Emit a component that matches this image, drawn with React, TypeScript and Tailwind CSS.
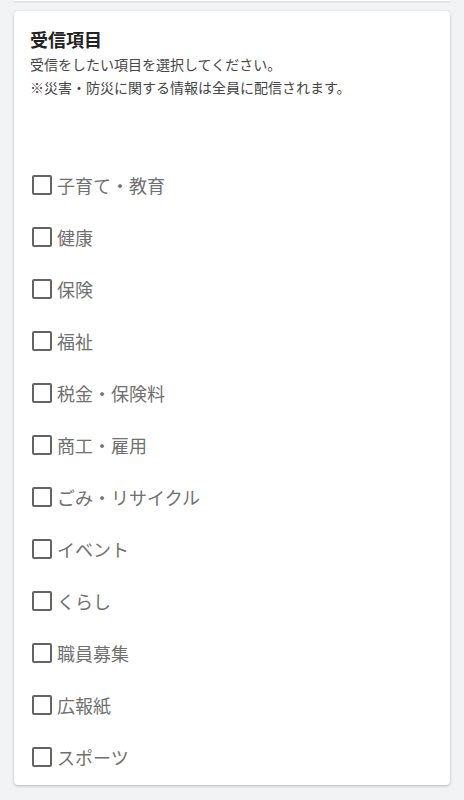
import React, { useState } from "react";

const items = [
  "子育て・教育",
  "健康",
  "保険",
  "福祉",
  "税金・保険料",
  "商工・雇用",
  "ごみ・リサイクル",
  "イベント",
  "くらし",
  "職員募集",
  "広報紙",
  "スポーツ",
];

export default function App() {
  const [checked, setChecked] = useState<Record<string, boolean>>({});

  const toggle = (name: string) => {
    setChecked((prev) => ({ ...prev, [name]: !prev[name] }));
  };

  return (
    <div
      className="min-h-[800px] w-[464px] bg-[#f2f3f5] pb-4"
      style={{ fontFamily: '"Noto Sans CJK JP", "Noto Sans", sans-serif' }}
    >
      {/* bottom edge of the previous card */}
      <div className="mx-[14px] h-[1px] bg-white shadow-[0_1px_2px_rgba(0,0,0,0.18)]" />

      <div className="mx-[14px] mt-[10px] rounded-[4px] bg-white px-4 pt-4 pb-[2px] shadow-[0_1px_3px_rgba(0,0,0,0.25)]">
        <h2 className="text-[18px] font-bold leading-[24px] text-[#222]">受信項目</h2>
        <div className="mt-[2px] text-[14px] leading-[23px] text-[#444]">
          <p>受信をしたい項目を選択してください。</p>
          <p>※災害・防災に関する情報は全員に配信されます。</p>
        </div>

        <ul className="mt-[60px] pl-[2px]">
          {items.map((name) => (
            <li key={name} className="flex h-[52px] items-center">
              <label className="flex cursor-pointer items-center gap-[5px]">
                <input
                  type="checkbox"
                  className="peer sr-only"
                  checked={!!checked[name]}
                  onChange={() => toggle(name)}
                />
                <span className="flex h-[20px] w-[20px] items-center justify-center rounded-[2px] border-2 border-[#646464] bg-white">
                  {checked[name] && (
                    <svg viewBox="0 0 16 16" className="h-[14px] w-[14px]">
                      <path d="M3 8.5l3 3 7-7" fill="none" stroke="#646464" strokeWidth="2" />
                    </svg>
                  )}
                </span>
                <span className="text-[18px] leading-[24px] text-[#707070]">{name}</span>
              </label>
            </li>
          ))}
        </ul>
      </div>
    </div>
  );
}
